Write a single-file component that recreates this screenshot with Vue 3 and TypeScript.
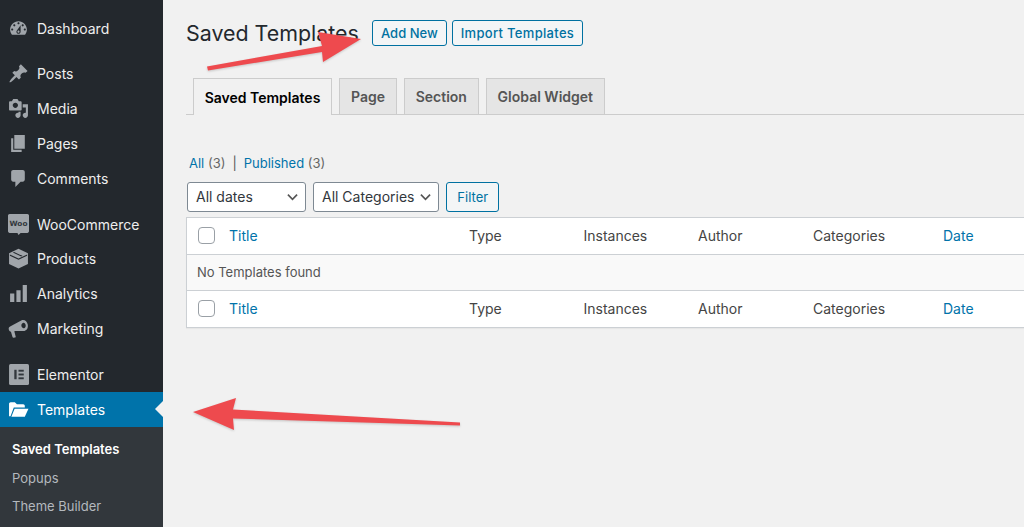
<script setup lang="ts">
interface NavItem { label: string; icon: string; active?: boolean; gapBefore?: boolean }
const nav: NavItem[] = [
  { label: 'Dashboard', icon: 'dashboard' },
  { label: 'Posts', icon: 'posts', gapBefore: true },
  { label: 'Media', icon: 'media' },
  { label: 'Pages', icon: 'pages' },
  { label: 'Comments', icon: 'comments' },
  { label: 'WooCommerce', icon: 'woo', gapBefore: true },
  { label: 'Products', icon: 'products' },
  { label: 'Analytics', icon: 'analytics' },
  { label: 'Marketing', icon: 'marketing' },
  { label: 'Elementor', icon: 'elementor', gapBefore: true },
  { label: 'Templates', icon: 'templates', active: true },
]
const paths: Record<string, string> = {
  dashboard: 'M3.76 16h12.48c1.1-1.37 1.76-3.11 1.76-5 0-4.42-3.58-8-8-8s-8 3.58-8 8c0 1.89.66 3.63 1.76 5zM10 4c.55 0 1 .45 1 1s-.45 1-1 1-1-.45-1-1 .45-1 1-1zM6 6c.55 0 1 .45 1 1s-.45 1-1 1-1-.45-1-1 .45-1 1-1zm8 0c.55 0 1 .45 1 1s-.45 1-1 1-1-.45-1-1 .45-1 1-1zm-5.37 5.55L12 7v6c0 1.1-.9 2-2 2s-2-.9-2-2c0-.57.24-1.08.63-1.45zM4 10c.55 0 1 .45 1 1s-.45 1-1 1-1-.45-1-1 .45-1 1-1zm12 0c.55 0 1 .45 1 1s-.45 1-1 1-1-.45-1-1 .45-1 1-1zm-5 3c0-.55-.45-1-1-1s-1 .45-1 1 .45 1 1 1 1-.45 1-1z',
  posts: 'M10.44 3.02l1.82-1.82 6.36 6.35-1.83 1.82c-1.05-.68-2.48-.57-3.41.36l-.75.75c-.92.93-1.04 2.35-.35 3.41l-1.83 1.82-2.41-2.41-2.8 2.79c-.42.42-3.38 2.71-3.8 2.29s1.86-3.39 2.28-3.81l2.79-2.79L4.1 9.36l1.83-1.82c1.05.69 2.48.57 3.4-.36l.75-.75c.93-.92 1.05-2.35.36-3.41z',
  media: 'M13 11V4c0-.55-.45-1-1-1h-1.67L9 1H5L3.67 3H2c-.55 0-1 .45-1 1v7c0 .55.45 1 1 1h10c.55 0 1-.45 1-1zM7 4.5c1.38 0 2.5 1.12 2.5 2.5S8.38 9.5 7 9.5 4.5 8.38 4.5 7 5.62 4.5 7 4.5zM14 6h5v10.5c0 1.38-1.12 2.5-2.5 2.5S14 17.88 14 16.500s1.120-2.500 2.500-2.500c.17 0 .34.02.5.05V9h-3V6zm-4 8.05V13h2v3.500c0 1.380-1.120 2.500-2.500 2.500S7 17.880 7 16.500 8.120 14 9.500 14c.17 0 .34.02.5.05z',
  pages: 'M6 15V2h10v13H6zm-1 1h8v2H3V5h2v11z',
  comments: 'M5 2h9c1.1 0 2 .9 2 2v7c0 1.1-.9 2-2 2h-2l-5 5v-5H5c-1.1 0-2-.9-2-2V4c0-1.1.9-2 2-2z',
  products: 'M10 .8L19 5v10.200L10 19.600 1 15.200V5zM1.800 6.200L10 10l8.200-3.800v1.200L10 11.200 1.800 7.400zM5.800 3.700l8 3.800-1.200.6-8-3.800z',
  analytics: 'M18 18V2h-4v16h4zm-6 0V7H8v11h4zm-6 0v-8H2v8h4z',
  marketing: 'M13.500 2c2.400-.7 4.700 1.300 5.300 4.300s-.7 5.500-3.100 6.100L7 12.300l-1 .3 1.300 4.900c.1.500-.2 1-.7 1.100l-1.200.2c-.5.100-1-.2-1.100-.7L2.800 13C1.700 12.900 1 11.800.7 10.600c-.2-1.100.3-2.200 1.300-2.600zM14.200 4.700c-1.100.3-1.700 1.600-1.400 3s1.500 2.300 2.600 2 1.700-1.600 1.400-3-1.500-2.300-2.600-2z',
  templates: 'M1 16.500V4.500c0-.8.7-1.500 1.500-1.500h4l2 2h6c.8 0 1.500.7 1.500 1.500V8H5.500L2.400 16.500H1.500zM6.300 9.300H19.500L16 17H3.200z',
}
const tabs = ['Saved Templates', 'Page', 'Section', 'Global Widget']
const rows = [0, 1]
</script>

<template>
  <div class="page">
    <aside class="side">
      <nav class="menu">
        <a v-for="item in nav" :key="item.label" class="item" :class="{ active: item.active, gapped: item.gapBefore }">
          <svg v-if="paths[item.icon]" class="ico" viewBox="0 0 20 20"><path fill-rule="evenodd" :d="paths[item.icon]" /></svg>
          <svg v-else-if="item.icon === 'woo'" class="ico" viewBox="0 0 20 20">
            <path d="M1.500 0h17c.8 0 1.500.7 1.500 1.500v15c0 .8-.7 1.500-1.500 1.500H12l-2 2-1-2H1.500C.7 18 0 17.300 0 16.500v-15C0 .7.700 0 1.500 0z" />
            <text x="10" y="11.500" text-anchor="middle" class="wootext">Woo</text>
          </svg>
          <svg v-else class="ico" viewBox="0 0 20 20">
            <rect x="1" y="0" width="19" height="20" rx="1.500" />
            <rect x="6" y="5.500" width="2.200" height="9" class="cut" />
            <rect x="10" y="5.500" width="5" height="1.800" class="cut" />
            <rect x="10" y="9.100" width="5" height="1.800" class="cut" />
            <rect x="10" y="12.700" width="5" height="1.800" class="cut" />
          </svg>
          <span>{{ item.label }}</span>
        </a>
      </nav>
      <div class="sub">
        <a class="subitem current">Saved Templates</a>
        <a class="subitem">Popups</a>
        <a class="subitem">Theme Builder</a>
      </div>
    </aside>

    <main class="main">
      <header class="head">
        <h1>Saved Templates</h1>
        <a class="btn add">Add New</a>
        <a class="btn import">Import Templates</a>
      </header>

      <div class="tabs">
        <a v-for="(t, i) in tabs" :key="t" class="tab" :class="{ on: i === 0 }">{{ t }}</a>
      </div>

      <p class="subsub"><a>All</a> (3)<span class="sep">|</span><a>Published</a> (3)</p>

      <div class="filters">
        <div class="select dates">
          <span>All dates</span>
          <svg viewBox="0 0 12 8" class="chev"><path d="M1 1.500l5 5 5-5" /></svg>
        </div>
        <div class="select cats">
          <span>All Categories</span>
          <svg viewBox="0 0 12 8" class="chev"><path d="M1 1.500l5 5 5-5" /></svg>
        </div>
        <a class="btn filter">Filter</a>
      </div>

      <div class="table">
        <template v-for="r in rows" :key="r">
          <div class="row">
            <span class="check"></span>
            <a class="link">Title</a>
            <span>Type</span>
            <span>Instances</span>
            <span>Author</span>
            <span>Categories</span>
            <a class="link">Date</a>
          </div>
          <div v-if="r === 0" class="empty">No Templates found</div>
        </template>
      </div>
    </main>

    <svg class="arrows" viewBox="0 0 1024 527" aria-hidden="true">
      <polygon class="arrow" points="207,66.500 322,46 318,32 361,39 323,62 322,52 208,70.500" />
      <polygon class="arrow" points="193,412 236,398 233,409.500 460,422.500 460,425.500 233,418.500 234,430" />
    </svg>
  </div>
</template>

<style>
html, body { margin: 0; overflow: hidden; background: #f1f1f1; }
</style>

<style scoped>
.page {
  position: relative;
  display: flex;
  width: 1024px;
  height: 527px;
  overflow: hidden;
  background: #f1f1f1;
  font-family: Inter, "Liberation Sans", sans-serif;
  color: #444;
}
.side {
  flex: 0 0 163.400px;
  display: flex;
  flex-direction: column;
  background: #23282d;
}
.menu { padding-top: 10.800px; }
.item {
  position: relative;
  display: flex;
  align-items: center;
  gap: 8px;
  height: 34.800px;
  padding-left: 8px;
  font-size: 14px;
  color: #eee;
}
.item.gapped { margin-top: 11px; }
.item.active { background: #0073aa; color: #fff; }
.item.active::after {
  content: "";
  position: absolute;
  right: 0;
  top: 50%;
  margin-top: -8px;
  border: 8px solid transparent;
  border-left-width: 0;
  border-right-color: #f1f1f1;
}
.ico { flex: 0 0 21px; width: 21px; height: 21px; fill: #a0a5aa; }
.item.active .ico { fill: #fff; }
.wootext {
  font-family: "DejaVu Sans", sans-serif;
  font-size: 7px;
  font-weight: 700;
  fill: #32373c;
}
.cut { fill: #32373c; }
.sub {
  flex: 1;
  padding-top: 8.200px;
  background: #32373c;
}
.subitem {
  display: flex;
  align-items: center;
  height: 28.500px;
  padding-left: 12px;
  font-size: 13px;
  color: #b4b9be;
}
.subitem.current { color: #fff; font-weight: 600; }

.main {
  flex: 1;
  min-width: 0;
  padding: 20px 0 0 22.600px;
}
.head {
  display: flex;
  align-items: center;
  height: 26px;
}
h1 {
  margin: 0 14px 0 0;
  width: 172px;
  font-size: 21.400px;
  font-weight: 400;
  white-space: nowrap;
  color: #23282d;
}
.btn {
  box-sizing: border-box;
  display: flex;
  align-items: center;
  justify-content: center;
  height: 26px;
  padding: 0 8px;
  border: 1px solid #0071a1;
  border-radius: 3px;
  background: #f3f5f6;
  color: #0071a1;
  font-size: 13px;
  font-weight: 500;
  white-space: nowrap;
}
.add { margin-right: 5px; }
.import { letter-spacing: .32px; }
.tabs {
  display: flex;
  align-items: flex-start;
  gap: 7.300px;
  height: 37px;
  margin-top: 32px;
  padding-left: 7px;
  border-bottom: 1px solid #ccc;
  box-sizing: border-box;
}
.tab {
  box-sizing: border-box;
  display: flex;
  align-items: center;
  height: 36px;
  padding: 0 10.700px;
  border: 1px solid #ccc;
  border-bottom: 0;
  background: #e5e5e5;
  color: #555;
  font-size: 14px;
  font-weight: 600;
  white-space: nowrap;
}
.tab.on {
  height: 37px;
  background: #f1f1f1;
  color: #000;
}
.subsub {
  margin: 40px 0 0 3px;
  height: 16px;
  line-height: 16px;
  font-size: 13px;
  color: #666;
}
.sep { margin: 0 7px; color: #555; }
.subsub a, .link { color: #0073aa; }
.filters {
  display: flex;
  gap: 7px;
  margin-top: 10.500px;
  margin-left: 1px;
}
.select {
  box-sizing: border-box;
  display: flex;
  align-items: center;
  justify-content: space-between;
  height: 30px;
  padding: 0 7px 0 8px;
  border: 1px solid #7e8993;
  border-radius: 3px;
  background: #fff;
  font-size: 14px;
  color: #32373c;
}
.dates { width: 119px; }
.cats { width: 126.500px; }
.chev { width: 11px; height: 8px; fill: none; stroke: #555; stroke-width: 1.800; }
.filter { height: 30px; width: 52.500px; font-weight: 400; font-size: 13px; }
.table {
  box-sizing: border-box;
  width: 860px;
  margin-top: 5px;
  border: 1px solid #ccd0d4;
  background: #fff;
  box-shadow: 0 1px 1px rgba(0, 0, 0, .04);
}
.row {
  display: grid;
  grid-template-columns: 42px 240px 114.500px 114.500px 115px 130px 1fr;
  align-items: center;
  height: 36px;
  font-size: 14px;
  color: #444;
}
.check {
  box-sizing: border-box;
  width: 17px;
  height: 17px;
  margin-left: 11px;
  border: 1px solid #9aa0a6;
  border-radius: 4px;
  background: #fff;
}
.empty {
  box-sizing: border-box;
  display: flex;
  align-items: center;
  height: 37px;
  padding-left: 10px;
  border-top: 1px solid #ccd0d4;
  border-bottom: 1px solid #ccd0d4;
  background: #f9f9f9;
  font-size: 13px;
  color: #555;
}
.arrows {
  position: absolute;
  inset: 0;
  width: 1024px;
  height: 527px;
  pointer-events: none;
}
.arrow { fill: #ee4a4e; filter: drop-shadow(0 1px 1px rgba(0, 0, 0, .18)); }
</style>
